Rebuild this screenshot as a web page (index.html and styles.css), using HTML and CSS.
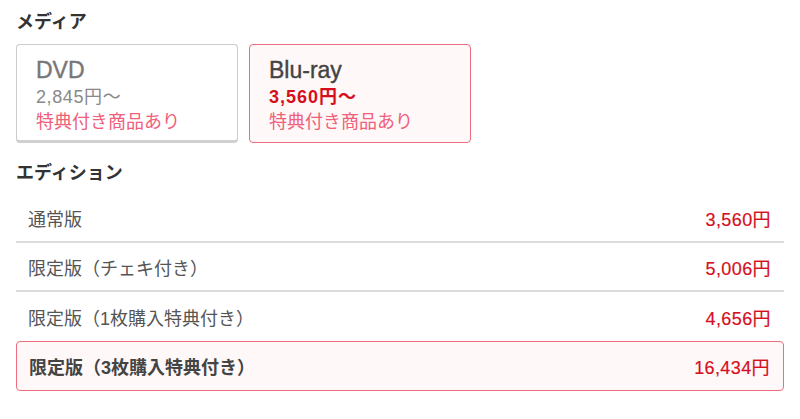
FILE: index.html
```html
<!DOCTYPE html>
<html lang="ja">
<head>
<meta charset="utf-8">
<link rel="stylesheet" href="styles.css">
</head>
<body>
<div class="page">
  <h2 class="heading">メディア</h2>
  <div class="cards">
    <div class="card">
      <div class="card-title">DVD</div>
      <div class="card-price">2,845円〜</div>
      <div class="card-note">特典付き商品あり</div>
    </div>
    <div class="card card-selected">
      <div class="card-title">Blu-ray</div>
      <div class="card-price">3,560円〜</div>
      <div class="card-note">特典付き商品あり</div>
    </div>
  </div>
  <h2 class="heading heading-edition">エディション</h2>
  <ul class="editions">
    <li class="edition"><span class="edition-name">通常版</span><span class="edition-price">3,560円</span></li>
    <li class="edition"><span class="edition-name">限定版（チェキ付き）</span><span class="edition-price">5,006円</span></li>
    <li class="edition"><span class="edition-name">限定版（1枚購入特典付き）</span><span class="edition-price">4,656円</span></li>
    <li class="edition edition-selected"><span class="edition-name">限定版（3枚購入特典付き）</span><span class="edition-price">16,434円</span></li>
  </ul>
</div>
</body>
</html>
```
FILE: styles.css
```css
* { box-sizing: border-box; }
html, body { margin: 0; padding: 0; background: #fff; }
body {
  font-family: "Liberation Sans", "Noto Sans CJK JP", sans-serif;
  color: #333;
}
.page { padding: 9px 16px 0; }
.heading {
  margin: 0;
  font-size: 18px;
  line-height: 26px;
  font-weight: bold;
  color: #333;
}
.cards {
  display: flex;
  gap: 11px;
  margin-top: 9px;
}
.card {
  width: 222px;
  height: 99px;
  border: 1px solid #ccc;
  border-bottom: 3px solid #d0d0d0;
  border-radius: 4px;
  padding: 10px 0 0 19px;
  background: #fff;
}
.card-selected {
  border: 1px solid #ef6c7e;
  background: #fff8f8;
}
.card-title {
  font-size: 23px;
  line-height: 30px;
  color: #777;
  -webkit-text-stroke: 0.4px currentColor;
}
.card-price {
  font-size: 18px;
  line-height: 25px;
  letter-spacing: 0.6px;
  color: #888;
}
.card-note {
  font-size: 18px;
  line-height: 24px;
  color: #f0607a;
}
.card-selected .card-title { color: #444; }
.card-selected .card-price { color: #d50f1d; font-weight: bold; letter-spacing: 1px; }
.heading-edition { margin-top: 17px; }
.editions {
  list-style: none;
  margin: 8px 0 0;
  padding: 0;
}
.edition {
  display: flex;
  justify-content: space-between;
  align-items: center;
  height: 49px;
  padding: 0 13px 0 12px;
  border-bottom: 2px solid #dcdcdc;
  font-size: 18px;
}
.edition-name { color: #555; }
.edition-price { color: #d50f1d; letter-spacing: 0.4px; -webkit-text-stroke: 0.2px currentColor; }
.edition:nth-child(3) { border-bottom: none; }
.edition-selected {
  height: 50px;
  border: 1px solid #ef6c7e;
  border-radius: 4px;
  background: #fff8f8;
}
.edition-selected .edition-name { font-weight: bold; color: #444; }
```
